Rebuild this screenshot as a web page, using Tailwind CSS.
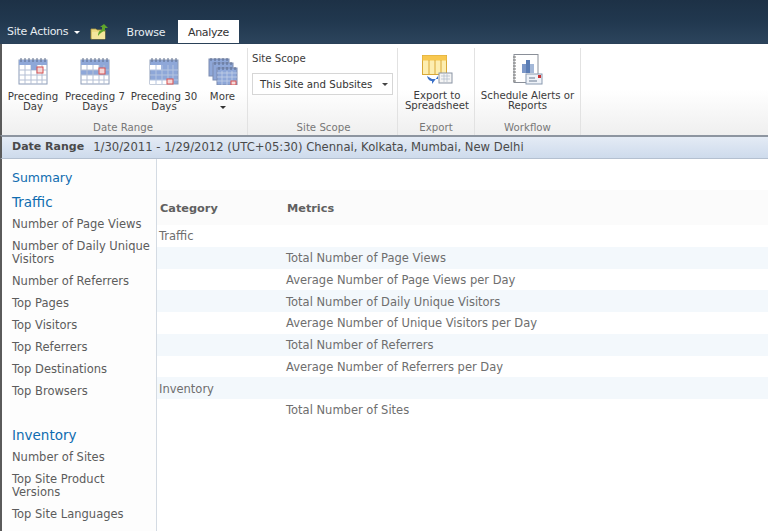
<!DOCTYPE html>
<html><head><meta charset="utf-8"><script src="https://cdn.jsdelivr.net/npm/@tailwindcss/browser@4"></script></head>
<body class="m-0 overflow-hidden bg-white">
<div class="w-[768px] h-[531px] overflow-hidden flex flex-col font-['DejaVu_Sans',Verdana,sans-serif] text-[11.5px] text-[#5c5c5c]">
  <!-- Top bar -->
  <div class="h-[44px] shrink-0 bg-gradient-to-b from-[#1d3146] via-[#21384f] to-[#2c445c] flex items-end border-b border-[#2a4158]">
    <div class="flex items-center h-[44px] pl-[7px] pt-[23px] w-[90px] text-[#e8edf2] text-[11px] tracking-[-0.3px]">Site Actions
      <span class="ml-[6px] w-0 h-0 border-x-[3px] border-x-transparent border-t-[3px] border-t-white"></span></div>
    <div class="w-[26px] h-[44px] flex items-center pt-[22px]">
      <svg width="18" height="16" viewBox="0 0 18 16"><path d="M1 5h5l1 1h8v9H1z" fill="#efdc84" stroke="#b09a40" stroke-width=".8"/><path d="M2 8h13v7H2z" fill="#f5e69c"/><path d="M8 12c0-4 2-6 4-6V3l-2 0 4-3 4 4h-3v3c-2 0-5 2-7 5z" fill="#5fa52c"/></svg>
    </div>
    <div class="w-[60px] mr-[2px] h-[23px] flex items-center justify-center text-[#e8edf2] text-[11px] pt-[3px] tracking-[-0.2px]">Browse</div>
    <div class="w-[61px] h-[23px] bg-white flex items-center justify-center text-[#333] text-[11px] tracking-[-0.35px] pt-[3px]">Analyze</div>
  </div>
  <!-- Ribbon -->
  <div class="h-[91px] shrink-0 flex border-l-2 border-[#5a5a5a] bg-gradient-to-b from-white via-white to-[#efefef] text-[#3b3b3b] text-[10.2px] leading-[10px]">
    <div class="w-[246px] flex flex-col border-r border-[#e2e2e2] mt-[4px]">
      <div class="flex flex-1 pt-[10px]">
        <div class="w-[62px] flex flex-col items-center">
          <svg width="30" height="27" viewBox="0 0 30 27"><rect x="1" y="2" width="28" height="24" fill="#fff" stroke="#8c9cb8"/><rect x="1" y="2" width="28" height="5" fill="#8ea7d8"/><path d="M1 12h28M1 17h28M1 22h28M7 7v19M13 7v19M19 7v19M24 7v19" stroke="#b4bfd4" stroke-width="1"/><rect x="13" y="7" width="6" height="5" fill="#8ea7d8"/><rect x="19" y="9" width="6" height="6" fill="#f4d8d8" stroke="#d85050"/><path d="M3 0v4M7 0v4M11 0v4M15 0v4M19 0v4M23 0v4M27 0v4" stroke="#5a6a8a"/></svg>
          <div class="mt-[7px] text-center">Preceding<br>Day</div>
        </div>
        <div class="w-[62px] flex flex-col items-center">
          <svg width="30" height="27" viewBox="0 0 30 27"><rect x="1" y="2" width="28" height="24" fill="#fff" stroke="#8c9cb8"/><rect x="1" y="2" width="28" height="5" fill="#8ea7d8"/><rect x="19" y="7" width="10" height="5" fill="#8ea7d8"/><rect x="1" y="12" width="28" height="5" fill="#8ea7d8"/><path d="M1 12h28M1 17h28M1 22h28M7 7v19M13 7v19M19 7v19M24 7v19" stroke="#b4bfd4"/><rect x="19" y="10" width="6" height="6" fill="#f4d8d8" stroke="#d85050"/><path d="M3 0v4M7 0v4M11 0v4M15 0v4M19 0v4M23 0v4M27 0v4" stroke="#5a6a8a"/></svg>
          <div class="mt-[7px] text-center whitespace-nowrap">Preceding 7<br>Days</div>
        </div>
        <div class="w-[76px] flex flex-col items-center">
          <svg width="30" height="27" viewBox="0 0 30 27"><rect x="1" y="2" width="28" height="24" fill="#8ea7d8" stroke="#8c9cb8"/><rect x="1" y="7" width="11" height="5" fill="#fff"/><rect x="1" y="22" width="17" height="4" fill="#fff"/><path d="M1 12h28M1 17h28M1 22h28M7 7v19M13 7v19M19 7v19M24 7v19" stroke="#b4c4e0"/><rect x="18" y="21" width="6" height="5" fill="#f4d8d8" stroke="#d85050"/><path d="M3 0v4M7 0v4M11 0v4M15 0v4M19 0v4M23 0v4M27 0v4" stroke="#5a6a8a"/></svg>
          <div class="mt-[7px] text-center whitespace-nowrap">Preceding 30<br>Days</div>
        </div>
        <div class="w-[41px] flex flex-col items-center">
          <svg width="30" height="27" viewBox="0 0 30 27"><rect x="1" y="1" width="20" height="17" fill="#8ea7d8" stroke="#7c8cb0"/><path d="M3 0v3M7 0v3M11 0v3M15 0v3M19 0v3" stroke="#5a6a8a"/><rect x="5" y="5" width="20" height="17" fill="#8ea7d8" stroke="#7c8cb0"/><path d="M7 4v3M11 4v3M15 4v3M19 4v3M23 4v3" stroke="#5a6a8a"/><rect x="9" y="10" width="20" height="17" fill="#8ea7d8" stroke="#7c8cb0"/><path d="M11 9v3M15 9v3M19 9v3M23 9v3M27 9v3" stroke="#5a6a8a"/><path d="M9 15h20M9 19h20M9 23h20M14 13v14M19 13v14M24 13v14" stroke="#c4d0e8" stroke-width=".8"/><rect x="23" y="23" width="5" height="4" fill="#f4d8d8" stroke="#d85050"/></svg>
          <div class="mt-[7px] text-center">More</div>
          <div class="mt-[4px] w-0 h-0 border-x-[3px] border-x-transparent border-t-[3px] border-t-[#333]"></div>
        </div>
      </div>
      <div class="text-center text-[#777] h-[12px] pr-[3px]">Date Range</div>
    </div>
    <div class="w-[150px] flex flex-col border-r border-[#e2e2e2] mt-[4px]">
      <div class="flex-1 pl-[4px] pt-[6px]">
        <div>Site Scope</div>
        <div class="mt-[9px] w-[141px] h-[22px] bg-white border border-[#d6d6d6] flex items-center justify-between pl-[7px] pr-[4px] pt-[1px] text-[#333]">This Site and Subsites<span class="w-0 h-0 border-x-[3px] border-x-transparent border-t-[3px] border-t-[#444]"></span></div>
      </div>
      <div class="text-center text-[#777] h-[12px] pl-[2px]">Site Scope</div>
    </div>
    <div class="w-[77px] flex flex-col border-r border-[#e2e2e2] mt-[4px]">
      <div class="flex-1 flex flex-col items-center pt-[7px] pl-[2px]">
        <svg width="31" height="30" viewBox="0 0 31 30"><rect x=".5" y=".5" width="24" height="19" fill="#fdeeb0" stroke="#d8a838"/><rect x=".5" y=".5" width="24" height="5" fill="#f8c850"/><path d="M7 5v14M13 5v14M19 5v14" stroke="#d8a838"/><rect x="17" y="18" width="13" height="10" fill="#f4f4f4" stroke="#8a94a4"/><path d="M19 21h9M19 24h9M22 19v8M25 19v8" stroke="#b0bac8" stroke-width=".7"/><path d="M5 21l5 3h6v-3l-6 8v-3C8 26 6 25 5 21z" fill="#3a70c8"/></svg>
        <div class="mt-[6px] text-center whitespace-nowrap">Export to<br>Spreadsheet</div>
      </div>
      <div class="text-center text-[#777] h-[12px]">Export</div>
    </div>
    <div class="w-[106px] flex flex-col border-r border-[#e2e2e2] mt-[4px]">
      <div class="flex-1 flex flex-col items-center pt-[6px]">
        <svg width="31" height="31" viewBox="0 0 31 31"><rect x="2" y=".5" width="24" height="28" fill="#fff" stroke="#8a8f98"/><path d="M1 3h3M1 6h3M1 9h3M1 12h3M1 15h3M1 18h3M1 21h3M1 24h3M1 27h3" stroke="#777"/><rect x="10" y="10" width="4" height="9" fill="#7d98c8"/><rect x="14" y="6" width="4" height="13" fill="#5b7db5"/><rect x="18" y="10" width="4" height="9" fill="#a4b8d8"/><rect x="14" y="20" width="16" height="10" fill="#eef2f8" stroke="#8a9ab0"/><path d="M17 24h6M17 27h8" stroke="#6a7a90"/><rect x="26" y="21" width="3" height="3" fill="#c83030"/></svg>
        <div class="mt-[6px] text-center whitespace-nowrap">Schedule Alerts or<br>Reports</div>
      </div>
      <div class="text-center text-[#777] h-[12px]">Workflow</div>
    </div>
  </div>
  <!-- Date range bar -->
  <div class="h-[24px] shrink-0 border-t-2 border-[#8d95a0] border-b border-b-[#b4c0d0] border-l-2 border-l-[#5a5a5a] bg-gradient-to-b from-[#e4ebf5] to-[#cedbec] flex items-center pl-[10px] text-[#4a4a4a] text-[11.6px] whitespace-nowrap">
    <b class="font-bold text-[11px] mr-[9px]">Date Range</b>1/30/2011 - 1/29/2012 (UTC+05:30) Chennai, Kolkata, Mumbai, New Delhi
  </div>
  <!-- Body -->
  <div class="flex-1 flex border-l-2 border-[#5a5a5a] min-h-0">
    <div class="w-[155px] shrink-0 bg-[#fdfdfd] border-r border-[#d4dbe3] pl-[10px] pt-[11px] leading-[13px]">
      <div class="text-[12.5px] text-[#0f6cb0] leading-[16px]">Summary</div>
      <div class="text-[13.5px] text-[#0f6cb0] leading-[16px] mt-[8px]">Traffic</div>
      <div class="flex flex-col gap-[9px] mt-[8px] pr-[4px]">
        <div>Number of Page Views</div>
        <div>Number of Daily Unique Visitors</div>
        <div>Number of Referrers</div>
        <div>Top Pages</div>
        <div>Top Visitors</div>
        <div>Top Referrers</div>
        <div>Top Destinations</div>
        <div>Top Browsers</div>
      </div>
      <div class="text-[13.5px] text-[#0f6cb0] leading-[16px] mt-[29px]">Inventory</div>
      <div class="flex flex-col gap-[9px] mt-[8px] pr-[4px]">
        <div>Number of Sites</div>
        <div>Top Site Product Versions</div>
        <div>Top Site Languages</div>
      </div>
    </div>
    <div class="flex-1 pt-[31px] text-[#6e6e6e]">
      <div class="h-[35px] bg-[#fbfbfb] flex items-center font-bold text-[11.3px] text-[#606060] pt-[3px]"><div class="w-[129px] pl-[3px]">Category</div><div class="pl-[1px]">Metrics</div></div>
      <div class="h-[21.75px] flex items-center pt-[2px] pl-[2px]">Traffic</div>
      <div class="h-[21.75px] flex items-center pt-[2px] pl-[129px] bg-[#f3f8fc]">Total Number of Page Views</div>
      <div class="h-[21.75px] flex items-center pt-[2px] pl-[129px]">Average Number of Page Views per Day</div>
      <div class="h-[21.75px] flex items-center pt-[2px] pl-[129px] bg-[#f3f8fc]">Total Number of Daily Unique Visitors</div>
      <div class="h-[21.75px] flex items-center pt-[2px] pl-[129px]">Average Number of Unique Visitors per Day</div>
      <div class="h-[21.75px] flex items-center pt-[2px] pl-[129px] bg-[#f3f8fc]">Total Number of Referrers</div>
      <div class="h-[21.75px] flex items-center pt-[2px] pl-[129px]">Average Number of Referrers per Day</div>
      <div class="h-[21.75px] flex items-center pt-[2px] pl-[2px] bg-[#f3f8fc]">Inventory</div>
      <div class="h-[21.75px] flex items-center pt-[2px] pl-[129px]">Total Number of Sites</div>
    </div>
  </div>
</div>
</body></html>
